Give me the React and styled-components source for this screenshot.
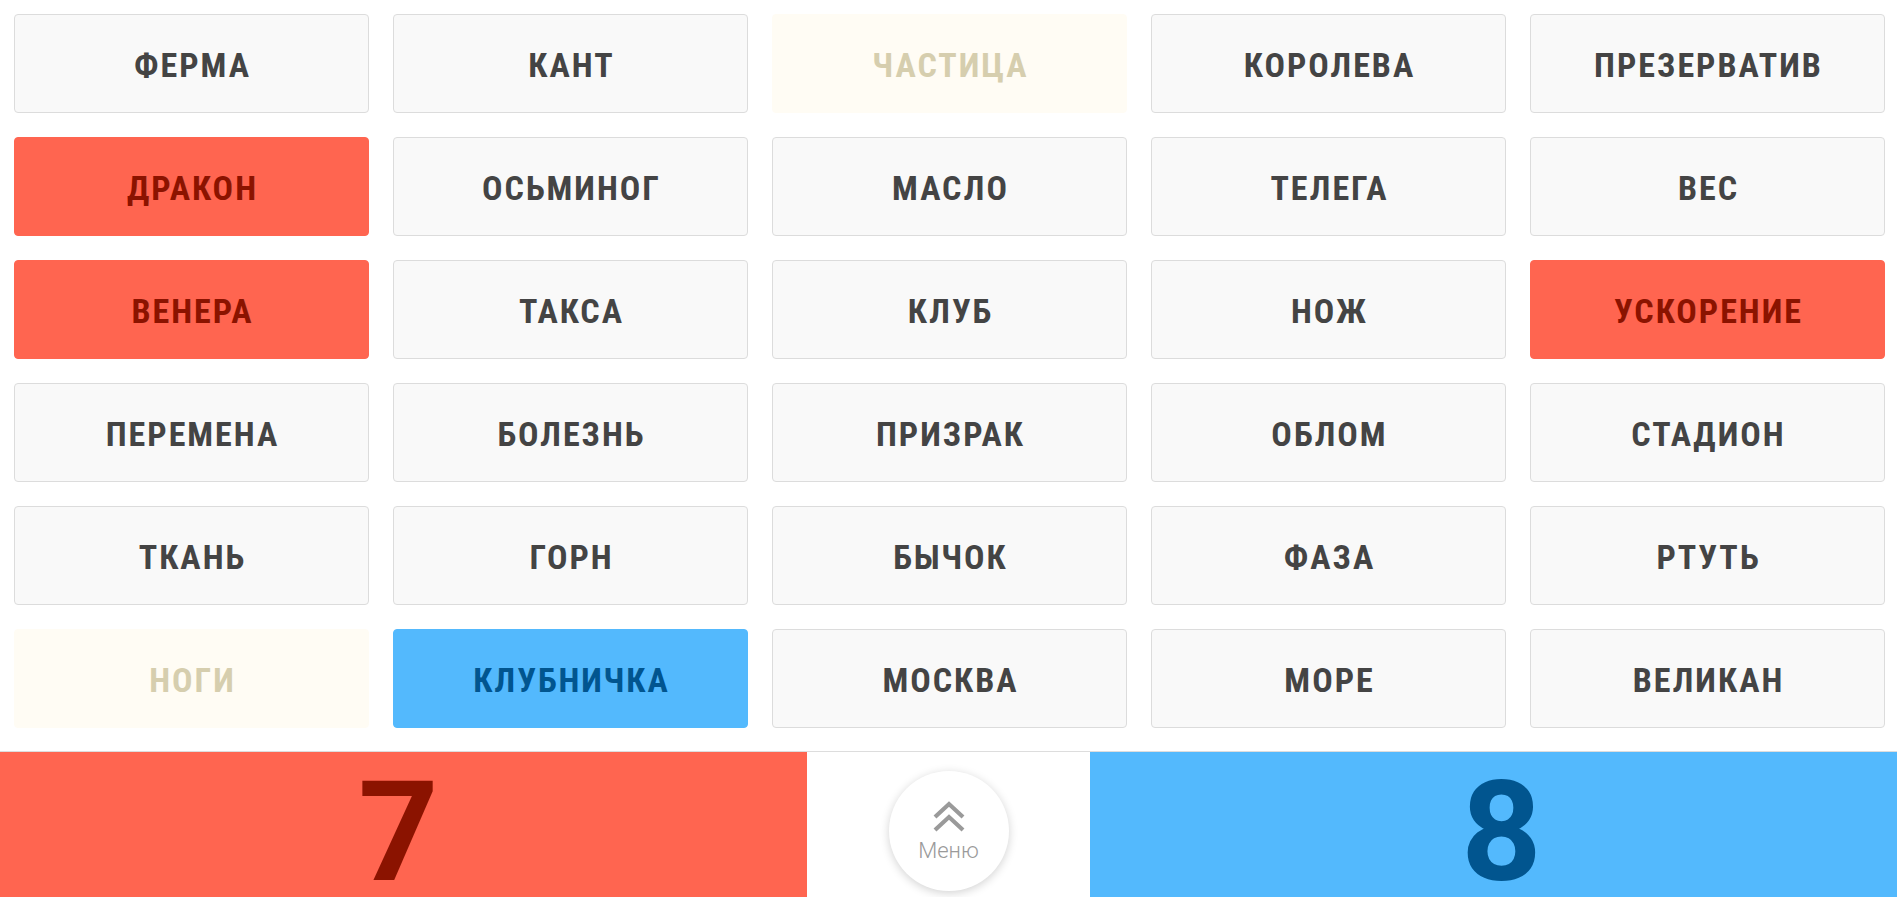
import React from "react";
import styled, { createGlobalStyle } from "styled-components";

const GlobalStyle = createGlobalStyle`
    html, body {
        margin: 0;
        padding: 0;
        background: #ffffff;
        font-family: Roboto, "Liberation Sans", sans-serif;
    }
`;

const words = [
    ["ФЕРМА", "neutral"], ["КАНТ", "neutral"], ["ЧАСТИЦА", "faded"], ["КОРОЛЕВА", "neutral"], ["ПРЕЗЕРВАТИВ", "neutral"],
    ["ДРАКОН", "red"], ["ОСЬМИНОГ", "neutral"], ["МАСЛО", "neutral"], ["ТЕЛЕГА", "neutral"], ["ВЕС", "neutral"],
    ["ВЕНЕРА", "red"], ["ТАКСА", "neutral"], ["КЛУБ", "neutral"], ["НОЖ", "neutral"], ["УСКОРЕНИЕ", "red"],
    ["ПЕРЕМЕНА", "neutral"], ["БОЛЕЗНЬ", "neutral"], ["ПРИЗРАК", "neutral"], ["ОБЛОМ", "neutral"], ["СТАДИОН", "neutral"],
    ["ТКАНЬ", "neutral"], ["ГОРН", "neutral"], ["БЫЧОК", "neutral"], ["ФАЗА", "neutral"], ["РТУТЬ", "neutral"],
    ["НОГИ", "faded"], ["КЛУБНИЧКА", "blue"], ["МОСКВА", "neutral"], ["МОРЕ", "neutral"], ["ВЕЛИКАН", "neutral"],
];

const cardColors = {
    neutral: { bg: "#f9f9f9", border: "#dcdcdc", text: "#444444" },
    red: { bg: "#ff6550", border: "#ff6550", text: "#8b1300" },
    blue: { bg: "#53b9fd", border: "#53b9fd", text: "#01558f" },
    faded: { bg: "#fffcf4", border: "#fffcf4", text: "#d6ceae" },
};

export default function App() {
    return (
        <>
            <GlobalStyle />
            <Page>
                <Board>
                    {words.map(([word, kind]) => (
                        <Card key={word} $kind={kind}>{word}</Card>
                    ))}
                </Board>
                <Footer>
                    <Score $team="red">7</Score>
                    <Middle>
                        <MenuButton>
                            <svg width="36" height="32" viewBox="0 0 36 32" fill="none">
                                <path d="M4 17 L18 4 L32 17" stroke="#9a9a9a" strokeWidth="4.2" />
                                <path d="M4 30 L18 17 L32 30" stroke="#9a9a9a" strokeWidth="4.2" />
                            </svg>
                            <MenuLabel>Меню</MenuLabel>
                        </MenuButton>
                    </Middle>
                    <Score $team="blue">8</Score>
                </Footer>
            </Page>
        </>
    );
}

const Page = styled.div`
    width: 100%;
    height: 897px;
    display: flex;
    flex-direction: column;
    overflow: hidden;
`

const Board = styled.div`
    display: grid;
    grid-template-columns: repeat(5, 1fr);
    grid-auto-rows: 99px;
    gap: 24px;
    padding: 14px 12px 23px 14px;
    flex: none;
`

const Card = styled.div`
    display: flex;
    justify-content: center;
    align-items: center;
    background: ${(p) => cardColors[p.$kind].bg};
    border: 1px solid ${(p) => cardColors[p.$kind].border};
    border-radius: 4px;
    color: ${(p) => cardColors[p.$kind].text};
    font-family: Roboto, "Liberation Sans", sans-serif;
    font-weight: 700;
    font-size: 34px;
    font-stretch: 86%;
    letter-spacing: 2px;
    padding: 2px 0 0 2px;
    box-sizing: border-box;
`

const Footer = styled.div`
    flex: 1;
    display: grid;
    grid-template-columns: 1fr 283px 1fr;
    border-top: 1px solid #dddddd;
    min-height: 0;
`

const Score = styled.div`
    display: flex;
    justify-content: center;
    align-items: center;
    background: ${(p) => (p.$team === "red" ? "#ff6550" : "#53b9fd")};
    color: ${(p) => (p.$team === "red" ? "#8b1300" : "#01558f")};
    font-family: Roboto, "Liberation Sans", sans-serif;
    font-weight: 700;
    font-size: 140px;
    font-stretch: 88%;
    line-height: 0.9;
    padding-top: 14px;
    padding-right: ${(p) => (p.$team === "red" ? "10px" : "0")};
    padding-left: ${(p) => (p.$team === "blue" ? "16px" : "0")};
`

const Middle = styled.div`
    display: flex;
    justify-content: center;
    align-items: center;
    background: #ffffff;
`

const MenuButton = styled.div`
    width: 120px;
    height: 120px;
    margin-top: 12px;
    border-radius: 50%;
    background: #ffffff;
    box-shadow: 0 2px 10px rgba(0, 0, 0, 0.18);
    display: flex;
    flex-direction: column;
    align-items: center;
    justify-content: center;
    gap: 6px;
    box-sizing: border-box;
    padding-top: 2px;
`

const MenuLabel = styled.span`
    font-family: Roboto, "Liberation Sans", sans-serif;
    font-weight: 300;
    font-size: 22px;
    color: #9a9a9a;
`
